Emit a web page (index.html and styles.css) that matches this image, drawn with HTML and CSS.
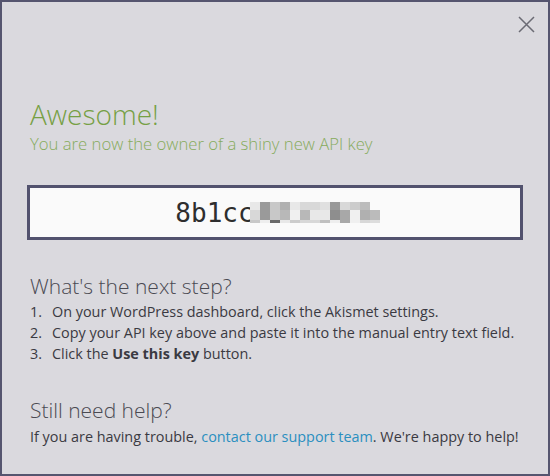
FILE: index.html
```html
<!DOCTYPE html>
<html lang="en">
<head>
	<meta charset="UTF-8">
	<title>Akismet - API key</title>
	<link rel="stylesheet" href="styles.css">
</head>
<body>
	<div class="dialog">
		<button class="close" type="button" aria-label="Close">
			<svg width="17" height="17" viewBox="0 0 17 17"><path d="M1 1L16 16M16 1L1 16" stroke="#6b6b74" stroke-width="1.5" fill="none"/></svg>
		</button>

		<h1 class="title">Awesome!</h1>
		<p class="subtitle">You are now the owner of a shiny new API key</p>

		<div class="key-box">
			<span class="key">8b1cc</span>
			<!-- pixelated part of the key -->
			<span class="mosaic">
				<i style="background:#e8e8e8"></i><i style="background:#9a9a9a"></i><i style="background:#c8c8c8"></i><i style="background:#b0b0b0"></i><i style="background:#e8e8e8"></i><i style="background:#d8d8d8"></i><i style="background:#d8d8d8"></i><i style="background:#e0e0e0"></i><i style="background:#999"></i><i style="background:#d8d8d8"></i><i style="background:#ccc"></i><i style="background:#bcbcbc"></i><i style="background:#fafafa"></i>
				<i style="background:#d8d8d8"></i><i style="background:#9a9a9a"></i><i style="background:#c8c8c8"></i><i style="background:#b8b8b8"></i><i style="background:#f0f0f0"></i><i style="background:#b8b8b8"></i><i style="background:#e8e8e8"></i><i style="background:#e8e8e8"></i><i style="background:#8e8e8e"></i><i style="background:#a8a8a8"></i><i style="background:#f0f0f0"></i><i style="background:#b0b0b0"></i><i style="background:#bbb"></i>
				<i style="background:#c8c8c8"></i><i style="background:#eee"></i><i style="background:#6a6a6a"></i><i style="background:#e8e8e8"></i><i style="background:#ccc"></i><i style="background:#d8d8d8"></i><i style="background:#d8d8d8"></i><i style="background:#c0c0c0"></i><i style="background:#eee"></i><i style="background:#a8a8a8"></i><i style="background:#f0f0f0"></i><i style="background:#d8d8d8"></i><i style="background:#ddd"></i>
			</span>
		</div>

		<h2 class="section">What's the next step?</h2>
		<ol class="steps">
			<li>On your WordPress dashboard, click the Akismet settings.</li>
			<li>Copy your API key above and paste it into the manual entry text field.</li>
			<li>Click the <strong>Use this key</strong> button.</li>
		</ol>

		<h2 class="section help">Still need help?</h2>
		<p class="note">If you are having trouble, <a href="#">contact our support team</a>. We're happy to help!</p>
	</div>
</body>
</html>
```

FILE: styles.css
```css
*{
    margin: 0;
    padding: 0;
    box-sizing: border-box;
}
body{
    font-family: "Open Sans", "Liberation Sans", sans-serif;
    color: #3a3a42;
    background: #dad9de;
}
.dialog{
    position: relative;
    width: 550px;
    height: 476px;
    padding: 95px 28px 0 28px;
    background: #dad9de;
    border: 2px solid #55556f;
}
.close{
    position: absolute;
    top: 13px;
    right: 12px;
    width: 19px;
    height: 19px;
    border: 0;
    background: none;
    display: flex;
    align-items: center;
    justify-content: center;
    cursor: pointer;
}
.title{
    font-size: 28px;
    line-height: 34px;
    font-weight: 300;
    color: #76a044;
}
.subtitle{
    margin-top: 3px;
    font-size: 16.7px;
    line-height: 20px;
    font-weight: 300;
    color: #86ab5c;
}
.key-box{
    margin: 31px -3px 0 -3px;
    padding-left: 5px;
    height: 55px;
    display: flex;
    align-items: center;
    justify-content: center;
    background: #fafafa;
    border: 3px solid #52526e;
}
.key{
    font-family: "DejaVu Sans Mono", monospace;
    font-size: 26px;
    color: #2e2e2e;
}
.mosaic{
    display: grid;
    grid-template-columns: repeat(13, 10px);
    grid-template-rows: 8px 10px 3px;
    margin-left: -4px;
}
.section{
    margin-top: 36px;
    font-size: 21px;
    line-height: 20px;
    font-weight: 300;
    color: #4a4a52;
}
.steps{
    list-style: none;
    counter-reset: step;
    margin-top: 5px;
    font-size: 14.4px;
    line-height: 21px;
}
.steps li{
    counter-increment: step;
    padding-left: 22px;
    text-indent: -22px;
}
.steps li::before{
    content: counter(step) ".";
    display: inline-block;
    width: 22px;
    text-indent: 0;
}
.help{
    margin-top: 36px;
}
.note{
    margin-top: 6px;
    font-size: 14.4px;
    line-height: 21px;
}
.note a{
    color: #2a8fc0;
    text-decoration: none;
}
```
